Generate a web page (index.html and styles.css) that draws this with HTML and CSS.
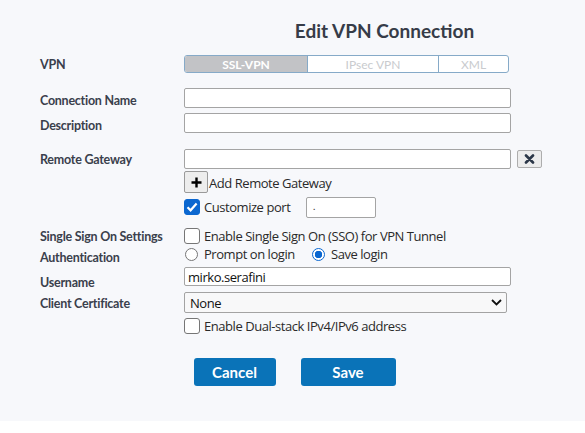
FILE: index.html
```html
<!DOCTYPE html>
<html>
<head>
<meta charset="utf-8">
<link rel="stylesheet" href="styles.css">
</head>
<body>
<div class="panel">
  <div class="title-row"><h1 class="title">Edit VPN Connection</h1></div>

  <div class="row r-vpn">
    <div class="label">VPN</div>
    <div class="seg">
      <span class="seg-item active s1">SSL-VPN</span>
      <span class="seg-item s2">IPsec VPN</span>
      <span class="seg-item s3">XML</span>
    </div>
  </div>

  <div class="row r-name">
    <div class="label lp">Connection Name</div>
    <div class="input wide"></div>
  </div>

  <div class="row r-desc">
    <div class="label lp">Description</div>
    <div class="input wide"></div>
  </div>

  <div class="row r-gw">
    <div class="label">Remote Gateway</div>
    <div class="input wide gw"></div>
    <button class="xbtn" aria-label="remove">
      <svg width="11" height="10" viewBox="0 0 11 10"><path d="M2 1.5 L9 8.5 M9 1.5 L2 8.5" stroke="#2a3647" stroke-width="2.6" stroke-linecap="round"/></svg>
    </button>
  </div>

  <div class="row r-add">
    <div class="label"></div>
    <button class="plusbtn" aria-label="add">
      <svg width="11" height="11" viewBox="0 0 11 11"><path d="M5.5 0.5 V10.5 M0.5 5.5 H10.5" stroke="#000" stroke-width="2.4"/></svg>
    </button>
    <span class="ctext add-text">Add Remote Gateway</span>
  </div>

  <div class="row r-port">
    <div class="label"></div>
    <span class="cb checked">
      <svg width="16" height="16" viewBox="0 0 16 16"><path d="M3.5 8.2 L6.6 11.3 L12.6 4.6" fill="none" stroke="#fff" stroke-width="2.2"/></svg>
    </span>
    <span class="ctext port-text">Customize port</span>
    <div class="input port"><span class="port-val">.</span></div>
  </div>

  <div class="row r-sso">
    <div class="label">Single Sign On Settings</div>
    <span class="cb"></span>
    <span class="ctext">Enable Single Sign On (SSO) for VPN Tunnel</span>
  </div>

  <div class="row r-auth">
    <div class="label lp2">Authentication</div>
    <span class="radio"></span>
    <span class="ctext rtext">Prompt on login</span>
    <span class="radio on"></span>
    <span class="ctext">Save login</span>
  </div>

  <div class="row r-user">
    <div class="label lp3">Username</div>
    <div class="input wide user"><span class="ctext">mirko.serafini</span></div>
  </div>

  <div class="row r-cert">
    <div class="label lp4">Client Certificate</div>
    <div class="select">
      <span class="ctext">None</span>
      <svg width="11" height="7" viewBox="0 0 11 7"><path d="M1 1 L5.5 5.5 L10 1" fill="none" stroke="#111" stroke-width="1.8"/></svg>
    </div>
  </div>

  <div class="row r-dual">
    <div class="label"></div>
    <span class="cb"></span>
    <span class="ctext">Enable Dual-stack IPv4/IPv6 address</span>
  </div>

  <div class="actions">
    <button class="btn cancel">Cancel</button>
    <button class="btn save">Save</button>
  </div>
</div>
</body>
</html>
```
FILE: styles.css
```css
* { box-sizing: border-box; }
html, body { margin: 0; padding: 0; background: #ffffff; }
body { width: 585px; height: 433px; overflow: hidden; }

.panel {
  background: #f7f8fb;
  height: 421px;
  padding: 0 0 0 40px;
  font-family: Lato, "Open Sans", sans-serif;
  color: #363c48;
}

.title-row {
  padding: 19px 0 0 144px;
  display: flex;
  justify-content: center;
  width: 545px;
}
.title {
  margin: 0;
  font-family: Lato, sans-serif;
  font-weight: 700;
  font-size: 19px;
  line-height: 24px;
  color: #363c48;
  letter-spacing: 0;
}

.row { display: flex; align-items: center; }
.label {
  width: 144px;
  flex: none;
  font-family: Lato, sans-serif;
  font-weight: 700;
  font-size: 12.5px;
  color: #3a404c;
  letter-spacing: -0.25px;
}
.lp { padding-top: 4px; }
.lp2 { padding-top: 6px; }
.lp3 { padding-top: 11px; }
.lp4 { padding-top: 2px; }

.ctext {
  font-family: "Open Sans", sans-serif;
  font-size: 13px;
  color: #2a2a2a;
  letter-spacing: -0.45px;
}

.r-vpn { margin-top: 12px; height: 18px; }
.r-name { margin-top: 15px; height: 20px; }
.r-desc { margin-top: 5px; height: 20px; }
.r-gw { margin-top: 16px; height: 20px; }
.r-add { margin-top: 2px; height: 21px; }
.r-port { margin-top: 5px; height: 20px; }
.r-sso { margin-top: 11px; height: 16px; }
.r-auth { margin-top: 0; height: 20px; }
.r-user { margin-top: 3px; height: 19px; }
.r-cert { margin-top: 6px; height: 21px; }
.r-dual { margin-top: 5px; height: 16px; }

/* segmented */
.seg {
  display: flex;
  height: 18px;
  width: 325px;
  border: 1px solid #86aac8;
  border-radius: 3px;
  overflow: hidden;
  background: #fff;
}
.seg-item {
  display: flex;
  align-items: center;
  justify-content: center;
  font-family: Lato, sans-serif;
  font-size: 12px;
  color: #c9cbce;
  height: 100%;
}
.seg-item.active { background: #c2c3c6; color: #fff; font-weight: 700; }
.s1 { width: 123px; border-right: 1px solid #86aac8; }
.s2 { width: 131px; border-right: 1px solid #86aac8; }
.s3 { flex: 1; }

/* inputs */
.input {
  background: #fff;
  border: 1px solid #a4a4a4;
  border-radius: 2px;
  height: 100%;
  display: flex;
  align-items: center;
}
.wide { width: 327px; }
.user { padding-left: 3px; }
.user .ctext { font-size: 13px; color: #111; letter-spacing: -0.45px; }

.xbtn {
  margin-left: 6px;
  width: 25px;
  height: 18px;
  padding: 0;
  border: 1px solid #adadad;
  border-radius: 2px;
  background: #ececec;
  display: flex;
  align-items: center;
  justify-content: center;
}

.plusbtn {
  width: 24px;
  height: 22px;
  padding: 0;
  border: 1px solid #9a9a9a;
  border-radius: 2px;
  background: #ededed;
  display: flex;
  align-items: center;
  justify-content: center;
  margin-top: 1px;
}
.add-text { margin-left: 1px; margin-top: 2px; }

.cb {
  width: 16px;
  height: 16px;
  flex: none;
  border: 1px solid #767676;
  border-radius: 3px;
  background: #fff;
  margin-right: 4px;
  display: flex;
}
.cb.checked { background: #0b67d0; border-color: #0b67d0; }
.cb.checked svg { margin: -1px; }

.port-text { width: 102px; }
.input.port { width: 70px; height: 21px; padding-left: 6px; }
.port-val { font-size: 10px; color: #333; margin-top: -2px; }

.radio {
  width: 13px;
  height: 13px;
  flex: none;
  border: 1px solid #767676;
  border-radius: 50%;
  background: #fff;
  margin-right: 6px;
  margin-left: 1px;
}
.radio.on {
  border: 1px solid #0b67d0;
  background: radial-gradient(circle, #0b67d0 0 3.5px, #fff 4px);
  margin-left: 0;
}
.rtext { width: 108px; }

.select {
  width: 323px;
  height: 100%;
  border: 1.5px solid #a3a3a3;
  border-radius: 2px;
  background: #f8f8f9;
  display: flex;
  align-items: center;
  justify-content: space-between;
  padding: 0 4px 0 5px;
}
.select .ctext { color: #111; }

.actions {
  display: flex;
  justify-content: center;
  gap: 25px;
  margin-top: 24px;
  margin-left: -40px;
  padding-left: 4px;
}
.btn {
  height: 28px;
  border: 0;
  border-radius: 3px;
  background: #0a73b8;
  color: #fff;
  font-family: Lato, sans-serif;
  font-weight: 700;
  font-size: 15px;
  padding: 0;
}
.cancel { width: 82px; }
.save { width: 95px; }
```
